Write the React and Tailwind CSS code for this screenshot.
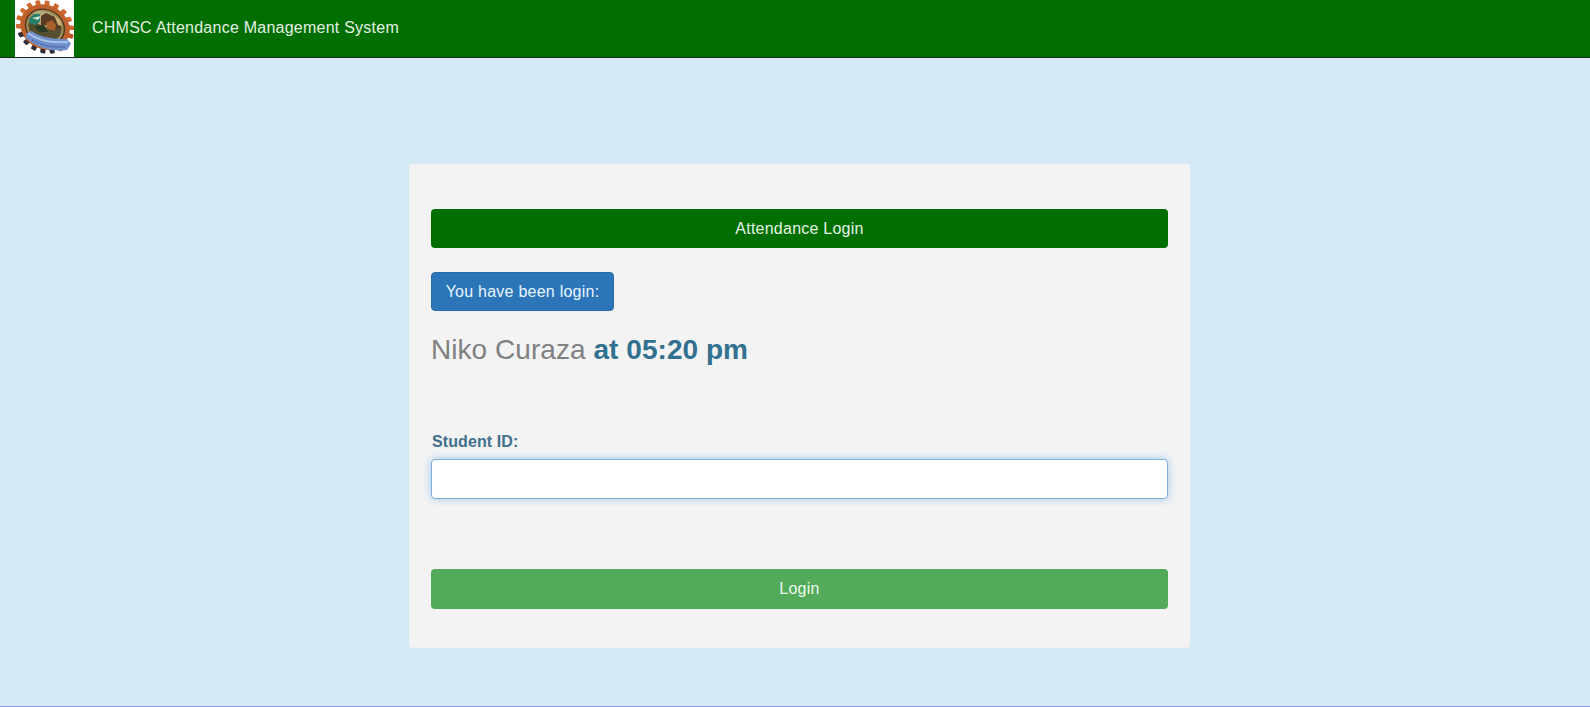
const teeth = Array.from({ length: 18 }, (_, i) => i * 20);

function GearLogo() {
  return (
    <svg viewBox="0 0 59 57" className="block h-[57px] w-[59px] shrink-0 bg-white" aria-hidden="true">
      <g transform="translate(30 27) rotate(28)">
        <g transform="scale(1 0.86)">
          {teeth.map((a) => (
            <rect
              key={a}
              x="-2.6"
              y="-30"
              width="5.2"
              height="9"
              rx="1.2"
              transform={`rotate(${a})`}
              fill={a > 130 && a < 230 ? "#2f2b38" : a > 60 && a < 140 ? "#b9562a" : "#d0692f"}
            />
          ))}
          <circle r="25.5" fill="#c0602c" />
          <circle r="20.8" fill="#4b3a22" />
          <circle r="19.3" fill="#a38c52" />
          <circle r="17" fill="#54502f" />
        </g>
      </g>
      <ellipse cx="31" cy="19.5" rx="14" ry="7.5" fill="#b5aa7c" transform="rotate(22 31 19.5)" />
      <path d="M14 19l5-5 6 0 0 7-4 4-7-2z" fill="#287f6c" />
      <path d="M17 18l9-2-3 4z" fill="#d5e9d4" />
      <path d="M26 16l5-3 9 4 6 9-8 6-6-7-6 1z" fill="#573b24" />
      <path d="M31 23l6-3 4 5-1 6-8-2z" fill="#a8622c" />
      <path d="M19 26l10-1 4 7-9 0z" fill="#2b3a22" />
      <path d="M39 15l6 5 2 6-4-1z" fill="#d2b174" />
      <path d="M11 34l5-3q14 9 36 8l4 5-4 6q-25 3-41-12z" fill="#6f90cd" />
      <path d="M13 33q14 11 40 9" fill="none" stroke="#a9c3e8" strokeWidth="2" />
      <path d="M17 40q14 8 33 7" fill="none" stroke="#4b67a5" strokeWidth="1.5" strokeDasharray="2 1" />
    </svg>
  );
}

export default function App() {
  return (
    <div className="flex h-[707px] w-full flex-col items-center border-b border-[#8099e6] bg-[#d6eaf5] font-['Liberation_Sans',Arial,sans-serif] text-base leading-[23px] tracking-[0.24px]">
      <header className="flex h-[58px] w-full shrink-0 items-start border-b border-[#1c2c1c] bg-[#006e00] pl-[15px]">
        <GearLogo />
        <span className="ml-[18px] mt-4 whitespace-nowrap text-[#e3f1e3]">CHMSC Attendance Management System</span>
      </header>

      <main className="ml-[9px] mt-[106px] flex h-[484px] w-[781px] flex-col items-start rounded bg-[#f3f3f3] px-[22px] pt-[45px]">
        <div className="flex h-[39px] w-full items-center justify-center rounded bg-[#006e00] text-[#e6f4e6]">
          Attendance Login
        </div>
        <div className="mt-6 flex h-[39px] w-[183px] items-center justify-center rounded border border-[#2b6da8] bg-[#2c75b8] text-[#e8f5ff]">
          You have been login:
        </div>
        <h1 className="mt-[23px] whitespace-nowrap text-[28px] leading-8 tracking-[0.05px] text-[#808080]">
          Niko Curaza <strong className="font-bold text-[#31708f]">at 05:20 pm</strong>
        </h1>
        <label htmlFor="student-id" className="mt-16 pl-px font-bold tracking-[0.1px] text-[#40708c]">
          Student ID:
        </label>
        <input
          id="student-id"
          type="text"
          className="mt-[6px] h-10 w-full rounded border border-[#80afdb] bg-white px-3 shadow-[0_0_8px_rgba(102,175,233,0.6)] outline-none"
        />
        <button type="button" className="mt-[70px] h-10 w-full rounded bg-[#53aa5b] pb-px text-[#ecfaec]">
          Login
        </button>
      </main>
    </div>
  );
}
